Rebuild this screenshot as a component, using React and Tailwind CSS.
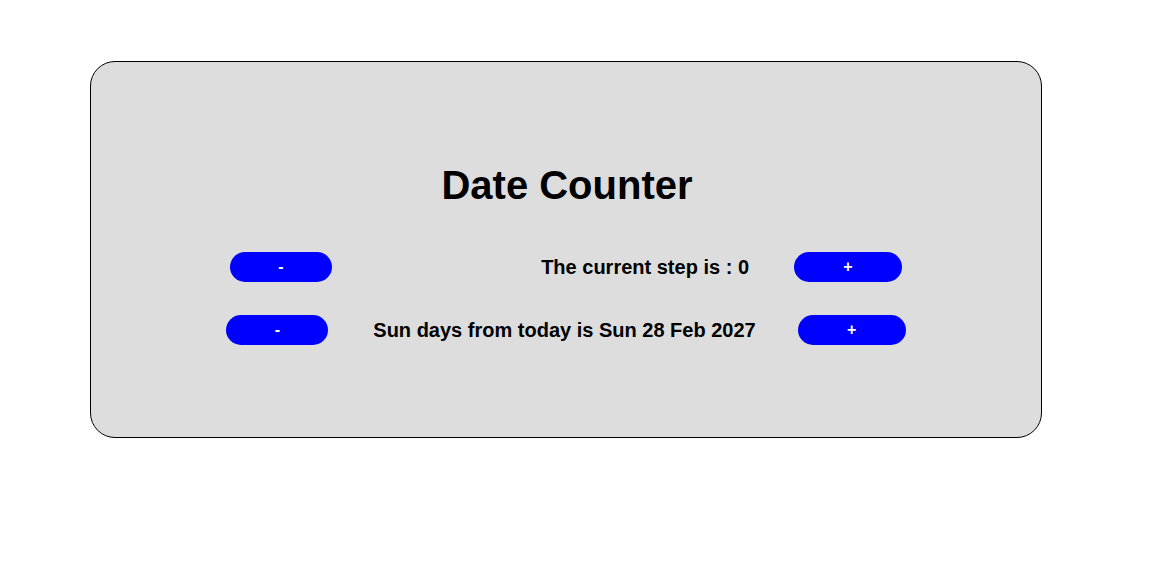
import React, { useState } from 'react';

const App = () => {
  const [step, setStep] = useState(0);
  const [count, setCount] = useState(0);

  const dateText = 'Sun 28 Feb 2027';

  return (
    <div className="min-h-[575px] bg-white font-['Liberation_Sans',Arial,sans-serif] text-black">
      <div className="ml-[90px] pt-[61px]">
        <div className="w-[952px] h-[377px] bg-[#dddddd] border border-black rounded-[25px] flex flex-col items-center pt-[99px]">
          {/* Title */}
          <h1 className="text-[40px] leading-[48px] font-bold ml-[2px]">Date Counter</h1>

          {/* Step row */}
          <div className="flex items-center mt-[43px] h-[30px]">
            <button
              onClick={() => setStep(step - 1)}
              className="w-[102px] h-[30px] rounded-full bg-[#0000ff] text-white font-bold text-base"
            >
              -
            </button>
            <p className="w-[372px] ml-[45px] mr-[45px] text-right text-[20px] font-bold">
              The current step is : {step}
            </p>
            <button
              onClick={() => setStep(step + 1)}
              className="w-[108px] h-[30px] rounded-full bg-[#0000ff] text-white font-bold text-base"
            >
              +
            </button>
          </div>

          {/* Count row */}
          <div className="flex items-center mt-[33px] h-[30px]">
            <button
              onClick={() => setCount(count - 1)}
              className="w-[102px] h-[30px] rounded-full bg-[#0000ff] text-white font-bold text-base"
            >
              -
            </button>
            <p className="ml-[45px] mr-[42px] text-[20px] font-bold">
              Sun days from today is {dateText}
            </p>
            <button
              onClick={() => setCount(count + 1)}
              className="w-[108px] h-[30px] rounded-full bg-[#0000ff] text-white font-bold text-base"
            >
              +
            </button>
          </div>
        </div>
      </div>
    </div>
  );
};

export default App;
